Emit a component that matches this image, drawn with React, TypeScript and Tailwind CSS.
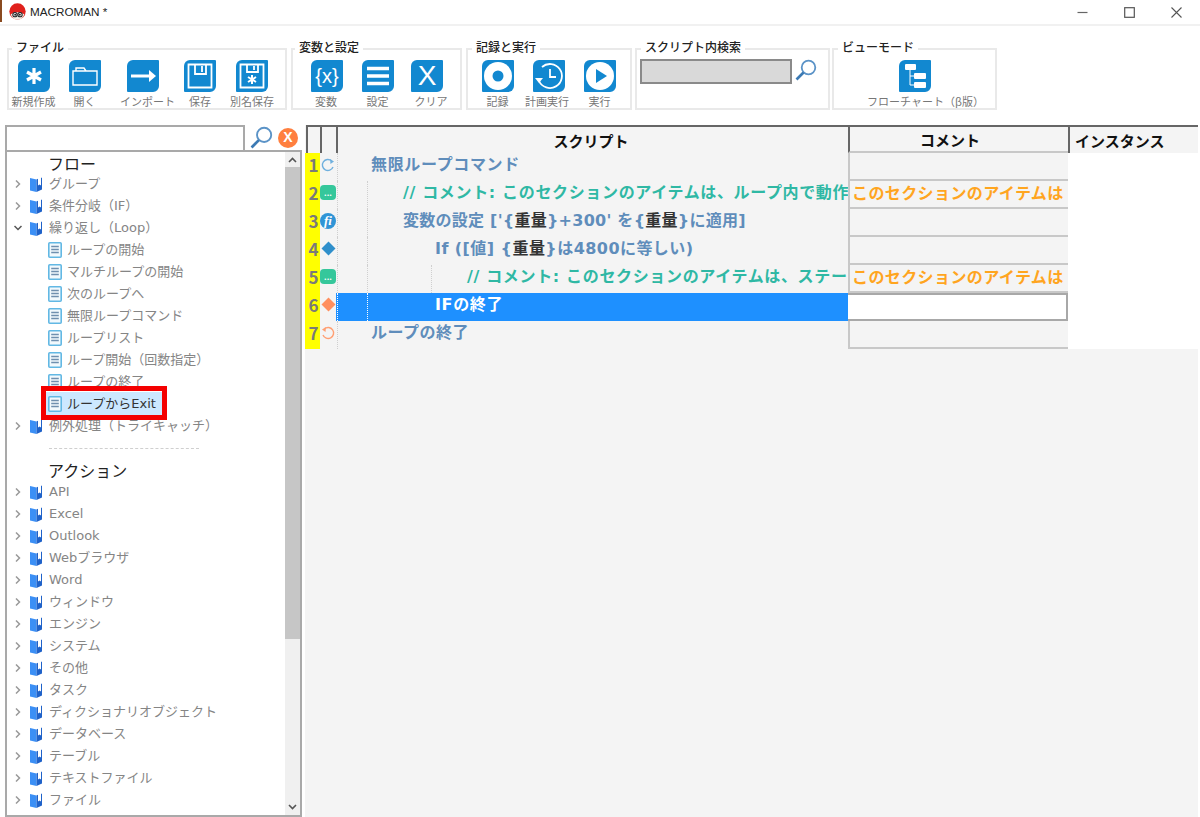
import type { ReactNode } from "react";

const jp = "font-['Noto_Sans_CJK_JP','Noto_Sans',sans-serif]";

function Logo() {
  return (
    <svg width="17" height="17" viewBox="0 0 16 16" className="-mt-[2px] mr-[4px]">
      <circle cx="8" cy="8" r="7.7" fill="#e0201c" />
      <path d="M1.5 10.5 Q8 7 14.5 10.5 Q12.5 15.7 8 15.7 Q3.5 15.7 1.5 10.5Z" fill="#f3eee6" />
      <circle cx="5.6" cy="11" r="2" fill="#fff" stroke="#222" strokeWidth="1" />
      <circle cx="10.4" cy="11" r="2" fill="#fff" stroke="#222" strokeWidth="1" />
      <circle cx="5.8" cy="11" r="0.9" fill="#222" />
      <circle cx="10.2" cy="11" r="0.9" fill="#222" />
    </svg>
  );
}

function TitleBar() {
  return (
    <div className="flex h-[26px] shrink-0 items-center border-b-2 border-[#f1f1f1] pl-[9px] text-[11.7px] text-[#222] font-['Liberation_Sans',sans-serif]">
      <Logo />
      <span>MACROMAN *</span>
      <div className="ml-auto flex items-center">
        <svg width="11" height="11" viewBox="0 0 11 11" className="mr-[36px]">
          <path d="M0.5 5.5H10.5" stroke="#666" strokeWidth="1.2" />
        </svg>
        <svg width="11" height="11" viewBox="0 0 11 11" className="mr-[36px]">
          <rect x="0.7" y="0.7" width="9.6" height="9.6" fill="none" stroke="#555" strokeWidth="1.2" />
        </svg>
        <svg width="11" height="11" viewBox="0 0 11 11" className="mr-[18px]">
          <path d="M0.5 0.5L10.5 10.5M10.5 0.5L0.5 10.5" stroke="#555" strokeWidth="1.1" />
        </svg>
      </div>
    </div>
  );
}

function Tile({ children }: { children: ReactNode }) {
  return (
    <div className="flex h-[32px] w-[32px] items-center justify-center rounded-[1px] rounded-tl-[6px] rounded-br-[6px] bg-[#1288d0] text-white">
      {children}
    </div>
  );
}

function ToolButton({
  label,
  width,
  labelClass,
  children,
}: {
  label: string;
  width: string;
  labelClass?: string;
  children: ReactNode;
}) {
  return (
    <div className={`flex flex-col items-center ${width}`}>
      <Tile>{children}</Tile>
      <span className={`mt-[2px] whitespace-nowrap text-[11px] leading-[14px] text-[#777] ${labelClass ?? ""}`}>
        {label}
      </span>
    </div>
  );
}

function Group({ title, width, className, titleClass, children }: { title: string; width: string; className?: string; titleClass?: string; children: ReactNode }) {
  return (
    <div className={`h-[62px] shrink-0 border-2 border-[#e9e9e9] ${width} ${className ?? ""}`}>
      <div className={`-mt-[10px] w-fit bg-white px-[4px] text-[12px] font-medium leading-[14px] text-[#222] ${titleClass ?? "ml-[4px]"}`}>{title}</div>
      <div className="mt-[6px] flex">{children}</div>
    </div>
  );
}

function Magnifier({ size }: { size: number }) {
  return (
    <svg width={size} height={size} viewBox="0 0 22 22">
      <circle cx="13.5" cy="8.5" r="6.8" fill="none" stroke="#5b93c7" strokeWidth="1.8" />
      <path d="M8.5 13.5L1.5 20.5" stroke="#3c7ab4" strokeWidth="2.6" />
    </svg>
  );
}

function Toolbar() {
  return (
    <div className="flex h-[99px] shrink-0 pl-[7px] pt-[22px]">
      <Group title="ファイル" width="w-[280px]" titleClass="ml-[3px]">
        <ToolButton label="新規作成" width="-ml-[1px] w-[51px]">
          <svg width="22" height="22" viewBox="0 0 22 22">
            <path d="M11 3V19M4 7L18 15M18 7L4 15" stroke="#fff" strokeWidth="3.2" />
          </svg>
        </ToolButton>
        <ToolButton label="開く" width="w-[51px]">
          <svg width="26" height="22" viewBox="0 0 26 22">
            <path d="M1 6H25V20H1Z M4 6V3H12L14 6" fill="none" stroke="#fff" strokeWidth="1.4" />
          </svg>
        </ToolButton>
        <ToolButton label="インポート" width="w-[65px]" labelClass="ml-[10px]">
          <svg width="26" height="14" viewBox="0 0 26 14">
            <path d="M1 7H20" stroke="#fff" strokeWidth="3" />
            <path d="M19 1L26 7L19 13Z" fill="#fff" />
          </svg>
        </ToolButton>
        <ToolButton label="保存" width="w-[50px]">
          <svg width="26" height="26" viewBox="0 0 26 26">
            <path d="M1.5 1.5H24.5V24.5H1.5Z M8 1.5V11H19V1.5 M15 3V9" fill="none" stroke="#fff" strokeWidth="1.8" />
          </svg>
        </ToolButton>
        <ToolButton label="別名保存" width="w-[54px]">
          <svg width="26" height="26" viewBox="0 0 26 26">
            <path d="M1.5 1.5H24.5V24.5H1.5Z M8 1.5V9H19V1.5 M15 3V7" fill="none" stroke="#fff" strokeWidth="1.8" />
            <path d="M13 12V21M9 14L17 19M17 14L9 19" stroke="#fff" strokeWidth="2" />
          </svg>
        </ToolButton>
      </Group>

      <Group title="変数と設定" width="w-[171px]" className="ml-[4px]" titleClass="ml-[2px]">
        <div className="w-[10px]" />
        <ToolButton label="変数" width="w-[48px]" labelClass="-ml-[2px]">
          <span className="font-['Liberation_Sans',sans-serif] text-[20px] leading-none">{"{x}"}</span>
        </ToolButton>
        <ToolButton label="設定" width="w-[53px]">
          <svg width="22" height="20" viewBox="0 0 22 20">
            <path d="M0 2.5H22M0 10H22M0 17.5H22" stroke="#fff" strokeWidth="3.4" />
          </svg>
        </ToolButton>
        <ToolButton label="クリア" width="w-[46px]" labelClass="ml-[8px]">
          <span className="font-['Liberation_Sans',sans-serif] text-[28px] leading-none">X</span>
        </ToolButton>
      </Group>

      <Group title="記録と実行" width="w-[166px]" className="ml-[4px]">
        <div className="w-[4px]" />
        <ToolButton label="記録" width="w-[51px]">
          <svg width="30" height="30" viewBox="0 0 30 30">
            <circle cx="15" cy="15" r="14" fill="#fff" />
            <circle cx="15" cy="15" r="5.5" fill="#1288d0" />
          </svg>
        </ToolButton>
        <ToolButton label="計画実行" width="w-[52px]" labelClass="-ml-[4px]">
          <svg width="30" height="30" viewBox="0 0 30 30">
            <path d="M5 20A12 12 0 1 0 8 6" fill="none" stroke="#fff" strokeWidth="1.8" />
            <path d="M1 17H9L5 22Z" fill="#fff" />
            <path d="M16 8V16H22" fill="none" stroke="#fff" strokeWidth="1.8" />
          </svg>
        </ToolButton>
        <ToolButton label="実行" width="w-[49px]">
          <svg width="30" height="30" viewBox="0 0 30 30">
            <circle cx="15" cy="15" r="14" fill="#fff" />
            <path d="M11 8L22 15L11 22Z" fill="#1288d0" />
          </svg>
        </ToolButton>
      </Group>

      <Group title="スクリプト内検索" width="w-[195px]" className="ml-[3px]">
        <div className="-mt-[1px] ml-[3px] h-[25px] w-[152px] border-2 border-[#8a8a8a] bg-[#d9d9d9]" />
        <div className="-mt-[1px] ml-[3px]">
          <Magnifier size={22} />
        </div>
      </Group>

      <Group title="ビューモード" width="w-[165px]" className="ml-[2px]">
        <div className="w-[64px]" />
        <ToolButton label="フローチャート（β版）" width="w-[34px]" labelClass="ml-[21px]">
          <svg width="24" height="26" viewBox="0 0 24 26">
            <rect x="2" y="1" width="11" height="6" rx="1" fill="#fff" />
            <rect x="11" y="10" width="12" height="6" rx="1" fill="#fff" />
            <rect x="11" y="19" width="12" height="6" rx="1" fill="#fff" />
            <path d="M7 7V22H11M7 13H11" fill="none" stroke="#fff" strokeWidth="1" />
          </svg>
        </ToolButton>
      </Group>
    </div>
  );
}

function Chevron({ open }: { open?: boolean }) {
  return (
    <svg width="8" height="8" viewBox="0 0 8 8" className="shrink-0">
      {open ? (
        <path d="M0.5 2L4 5.5L7.5 2" fill="none" stroke="#555" strokeWidth="1.5" />
      ) : (
        <path d="M2 0.5L5.5 4L2 7.5" fill="none" stroke="#999" strokeWidth="1.5" />
      )}
    </svg>
  );
}

function BookIcon() {
  return (
    <svg width="12" height="15" viewBox="0 0 12 15" className="shrink-0">
      <path d="M0 1L6.5 2.5V15L0 13.5Z" fill="#3b8ff5" />
      <path d="M6.5 2.5L8 1.8V8.5L9.5 7.5L11 8.5V0.8L12 0.8V12.5L6.5 15Z" fill="#1f62c9" />
    </svg>
  );
}

function DocIcon() {
  return (
    <svg width="14" height="16" viewBox="0 0 14 16" className="shrink-0">
      <rect x="0.8" y="0.8" width="12.4" height="14.4" rx="1" fill="#f2f9fd" stroke="#62b8e4" strokeWidth="1.6" />
      <path d="M3.2 4.5H10.8M3.2 7.5H10.8M3.2 10.5H10.8" stroke="#6f8fae" strokeWidth="1.3" />
    </svg>
  );
}

function FolderRow({ label, open }: { label: string; open?: boolean }) {
  return (
    <div className="flex h-[22px] items-center pl-[7px] text-[13px] text-[#858585]">
      <Chevron open={open} />
      <div className="ml-[8px]">
        <BookIcon />
      </div>
      <span className="ml-[7px] whitespace-nowrap">{label}</span>
    </div>
  );
}

function LeafRow({ label }: { label: string }) {
  return (
    <div className="flex h-[22px] items-center pl-[41px] text-[13px] text-[#858585]">
      <DocIcon />
      <span className="ml-[5px] whitespace-nowrap">{label}</span>
    </div>
  );
}

const flowLeaves = ["ループの開始", "マルチループの開始", "次のループへ", "無限ループコマンド", "ループリスト", "ループ開始（回数指定）", "ループの終了"];
const actions = ["API", "Excel", "Outlook", "Webブラウザ", "Word", "ウィンドウ", "エンジン", "システム", "その他", "タスク", "ディクショナリオブジェクト", "データベース", "テーブル", "テキストファイル", "ファイル"];

function Scrollbar() {
  return (
    <div className="flex w-[15px] shrink-0 flex-col bg-[#f0f0f0]">
      <div className="flex h-[15px] shrink-0 items-center justify-center">
        <svg width="9" height="6" viewBox="0 0 9 6">
          <path d="M1 5L4.5 1.5L8 5" fill="none" stroke="#555" strokeWidth="1.6" />
        </svg>
      </div>
      <div className="h-[472px] shrink-0 bg-[#c6c6c6]" />
      <div className="mt-auto flex h-[16px] shrink-0 items-center justify-center">
        <svg width="9" height="6" viewBox="0 0 9 6">
          <path d="M1 1L4.5 4.5L8 1" fill="none" stroke="#555" strokeWidth="1.6" />
        </svg>
      </div>
    </div>
  );
}

function LeftPane() {
  return (
    <div className="flex w-[305px] shrink-0 flex-col pl-[5px]">
      <div className="flex h-[25px] shrink-0 items-center">
        <div className="h-[25px] w-[240px] border-2 border-b-0 border-[#a9a9a9] bg-white" />
        <div className="ml-[5px]">
          <Magnifier size={23} />
        </div>
        <div className="ml-[5px] flex h-[20px] w-[20px] items-center justify-center rounded-full bg-[#ff7f3f] font-['Liberation_Sans',sans-serif] text-[14px] font-bold text-white">
          X
        </div>
      </div>
      <div className="relative flex min-h-0 w-[297px] flex-1 border-2 border-[#a9a9a9]">
        <div className="min-w-0 flex-1 overflow-hidden pt-[1px] font-['DejaVu_Sans','Noto_Sans_CJK_JP',sans-serif]">
          <div className="flex h-[20px] items-center pl-[41px] pt-[4px] text-[16px] text-[#222]">フロー</div>
          <FolderRow label="グループ" />
          <FolderRow label="条件分岐（IF）" />
          <FolderRow label="繰り返し（Loop）" open />
          {flowLeaves.map((label) => (
            <LeafRow key={label} label={label} />
          ))}
          <div className="flex h-[22px] items-center pl-[39px]">
            <div className="flex h-[24px] w-[116px] shrink-0 items-center bg-[#cce8ff] pl-[2px] text-[13px] text-[#333]">
              <DocIcon />
              <span className="ml-[5px] whitespace-nowrap">ループからExit</span>
            </div>
          </div>
          <FolderRow label="例外処理（トライキャッチ）" />
          <div className="flex h-[22px] items-center pl-[42px]">
            <div className="w-[150px] border-t border-dashed border-[#cfcfcf]" />
          </div>
          <div className="flex h-[22px] items-center pl-[41px] pt-[4px] text-[16px] text-[#222]">アクション</div>
          {actions.map((label) => (
            <FolderRow key={label} label={label} />
          ))}
        </div>
        <Scrollbar />
        {/* annotation frame drawn on top of the screenshot */}
        <div className="absolute left-[34px] top-[234px] h-[34px] w-[126px] border-[5px] border-[#f40000]" />
      </div>
    </div>
  );
}

function HeaderCell({ className, children }: { className: string; children?: ReactNode }) {
  return <div className={`flex h-full shrink-0 items-center border-l-2 border-[#666] pt-[2px] font-bold text-[#111] ${className}`}>{children}</div>;
}

function RowIcon({ n }: { n: number }) {
  if (n === 1) {
    return (
      <svg width="14" height="14" viewBox="0 0 14 14">
        <path d="M12 9A5.5 5.5 0 1 1 10.5 2.8" fill="none" stroke="#6fb0de" strokeWidth="1.4" />
        <path d="M9 1L13 3.5L9.5 6Z" fill="#6fb0de" />
      </svg>
    );
  }
  if (n === 2 || n === 5) {
    return (
      <div className="flex h-[15px] w-[16px] items-end justify-center rounded-[4px] bg-[#35c79b] pb-[3px] text-[8px] font-bold leading-[8px] text-white">
        ...
      </div>
    );
  }
  if (n === 3) {
    return (
      <div className="flex h-[16px] w-[16px] items-center justify-center rounded-full bg-[#2f94d6] font-['Liberation_Serif',serif] text-[13px] font-bold italic leading-none text-white">
        fi
      </div>
    );
  }
  if (n === 4 || n === 6) {
    return (
      <svg width="15" height="15" viewBox="0 0 15 15">
        <path d="M7.5 0.5L14.5 7.5L7.5 14.5L0.5 7.5Z" fill={n === 4 ? "#2f8fcb" : "#ff8f5f"} />
      </svg>
    );
  }
  return (
    <svg width="14" height="14" viewBox="0 0 14 14">
      <path d="M2 9A5.5 5.5 0 1 0 3.5 2.8" fill="none" stroke="#ff9f73" strokeWidth="1.4" />
      <path d="M5 1L1 3.5L4.5 6Z" fill="#ff9f73" />
    </svg>
  );
}

function Var() {
  return <span className="text-[#333]">重量</span>;
}

const indentClasses = ["pl-[35px]", "pl-[67px]", "pl-[99px]", "pl-[131px]"];

type Row = {
  n: number;
  indent: number;
  tone: string;
  spacing: string;
  guides: string[];
  content: ReactNode;
  comment?: string;
};

const rowComment = "このセクションのアイテムは";

const rows: Row[] = [
  { n: 1, indent: 0, tone: "text-[#5f8dbb]", spacing: "tracking-[0.65px]", guides: [], content: "無限ループコマンド" },
  {
    n: 2,
    indent: 1,
    tone: "text-[#2fb8a4]",
    spacing: "tracking-[0.65px]",
    guides: ["left-[31px]"],
    content: "// コメント: このセクションのアイテムは、ループ内で動作",
    comment: rowComment,
  },
  {
    n: 3,
    indent: 1,
    tone: "text-[#5f8dbb]",
    spacing: "tracking-[0.25px]",
    guides: ["left-[31px]"],
    content: (
      <>
        変数の設定 ['{"{"}
        <Var />
        {"}"}+300' を{"{"}
        <Var />
        {"}"}に適用]
      </>
    ),
  },
  {
    n: 4,
    indent: 2,
    tone: "text-[#5f8dbb]",
    spacing: "tracking-[0.45px]",
    guides: ["left-[31px]"],
    content: (
      <>
        If ([値] {"{"}
        <Var />
        {"}"}は4800に等しい)
      </>
    ),
  },
  {
    n: 5,
    indent: 3,
    tone: "text-[#2fb8a4]",
    spacing: "tracking-[0.65px]",
    guides: ["left-[31px]", "left-[95px]"],
    content: "// コメント: このセクションのアイテムは、ステー",
    comment: rowComment,
  },
  { n: 6, indent: 2, tone: "text-white", spacing: "tracking-[0.65px]", guides: ["left-[31px]"], content: "IFの終了" },
  { n: 7, indent: 0, tone: "text-[#5f8dbb]", spacing: "tracking-[0.5px]", guides: [], content: "ループの終了" },
];

function ScriptRow({ row }: { row: Row }) {
  const selected = row.n === 6;
  return (
    <div className="flex h-[28px]">
      <div className="flex w-[15px] shrink-0 items-center justify-center bg-[#ffff00] pb-[5px] pl-[2px] text-[17px] font-bold text-[#7a7a7a]">{row.n}</div>
      <div className="flex w-[16px] shrink-0 items-center justify-center pb-[5px]">
        <RowIcon n={row.n} />
      </div>
      <div
        className={`relative flex w-[512px] shrink-0 items-center overflow-hidden whitespace-nowrap pb-[4px] font-['DejaVu_Sans','Noto_Sans_CJK_JP',sans-serif] text-[16px] font-bold ${row.spacing} ${indentClasses[row.indent]} ${row.tone} ${
          selected ? "bg-[#1e90ff]" : ""
        }`}
      >
        <span className={`absolute bottom-0 left-[1px] top-0 border-l border-dotted ${selected ? "border-white" : "border-[#cfcfcf]"}`} />
        {row.guides.map((g) => (
          <span key={g} className={`absolute bottom-0 top-0 border-l border-dotted ${g} ${selected ? "border-white" : "border-[#cfcfcf]"}`} />
        ))}
        <span>{row.content}</span>
      </div>
      {selected ? (
        <div className="w-[220px] shrink-0 border-2 border-l-0 border-[#a8a8a8] bg-white" />
      ) : (
        <div className="flex w-[220px] shrink-0 items-center overflow-hidden whitespace-nowrap border-b-2 border-l-2 border-[#c8c8c8] pb-[4px] pl-[2px] text-[16px] font-bold tracking-[0.4px] text-[#ffa51f]">
          {row.comment}
        </div>
      )}
      <div className="flex-1 bg-white" />
    </div>
  );
}

function ScriptPane() {
  return (
    <div className="mr-[2px] min-w-0 flex-1 bg-[#f4f4f4]">
      <div className="ml-[1px] flex h-[28px] border-t-2 border-[#666] text-[15px]">
        <HeaderCell className="w-[14px]" />
        <HeaderCell className="w-[16px]" />
        <HeaderCell className="w-[512px] justify-center pr-[4px]">スクリプト</HeaderCell>
        <HeaderCell className="w-[220px] justify-center border-b-2 border-b-[#c8c8c8] pr-[18px]">コメント</HeaderCell>
        <HeaderCell className="flex-1 pl-[5px]">インスタンス</HeaderCell>
      </div>
      {rows.map((row) => (
        <ScriptRow key={row.n} row={row} />
      ))}
    </div>
  );
}

export default function App() {
  return (
    <div className={`relative flex h-[817px] w-[1200px] flex-col overflow-hidden bg-white ${jp}`}>
      {/* sliver of the desktop behind the captured window */}
      <div className="absolute left-0 top-0 h-[22px] w-[2px] bg-[#8a4a20]" />
      <TitleBar />
      <Toolbar />
      <div className="flex min-h-0 flex-1">
        <LeftPane />
        <ScriptPane />
      </div>
    </div>
  );
}
